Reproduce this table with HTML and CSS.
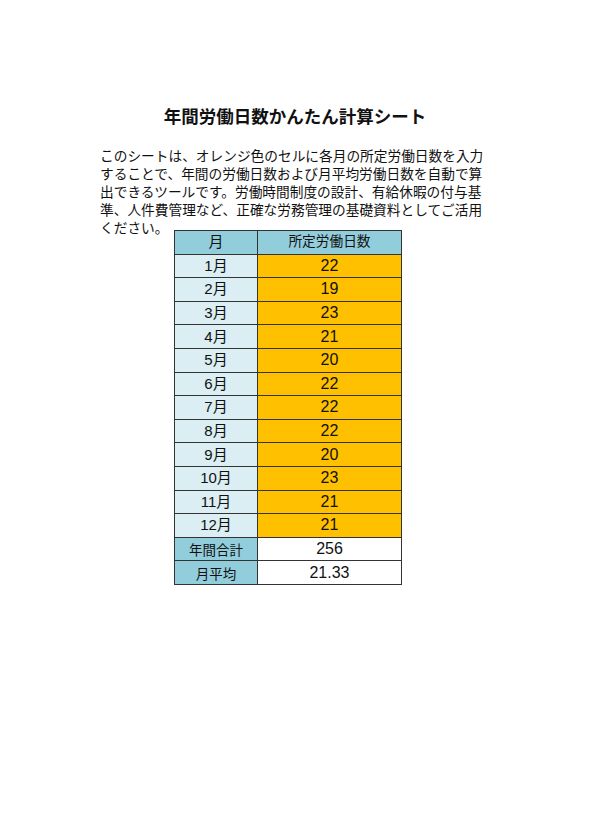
FILE: index.html
```html
<!DOCTYPE html>
<html lang="ja">
<head>
<meta charset="utf-8">
<link rel="stylesheet" href="styles.css">
</head>
<body>
<div class="page">
  <h1 class="title">年間労働日数かんたん計算シート</h1>
  <p class="intro">このシートは、オレンジ色のセルに各月の所定労働日数を入力<br>することで、年間の労働日数および月平均労働日数を自動で算<br>出できるツールです。労働時間制度の設計、有給休暇の付与基<br>準、人件費管理など、正確な労務管理の基礎資料としてご活用<br>ください。</p>
  <table class="sheet">
    <thead>
      <tr><th class="c-month">月</th><th class="c-val">所定労働日数</th></tr>
    </thead>
    <tbody>
      <tr><td class="c-month">1月</td><td class="c-input">22</td></tr>
      <tr><td class="c-month">2月</td><td class="c-input">19</td></tr>
      <tr><td class="c-month">3月</td><td class="c-input">23</td></tr>
      <tr><td class="c-month">4月</td><td class="c-input">21</td></tr>
      <tr><td class="c-month">5月</td><td class="c-input">20</td></tr>
      <tr><td class="c-month">6月</td><td class="c-input">22</td></tr>
      <tr><td class="c-month">7月</td><td class="c-input">22</td></tr>
      <tr><td class="c-month">8月</td><td class="c-input">22</td></tr>
      <tr><td class="c-month">9月</td><td class="c-input">20</td></tr>
      <tr><td class="c-month">10月</td><td class="c-input">23</td></tr>
      <tr><td class="c-month">11月</td><td class="c-input">21</td></tr>
      <tr><td class="c-month">12月</td><td class="c-input">21</td></tr>
      <tr><td class="c-label">年間合計</td><td class="c-result">256</td></tr>
      <tr><td class="c-label">月平均</td><td class="c-result">21.33</td></tr>
    </tbody>
  </table>
</div>
</body>
</html>
```

FILE: styles.css
```css
html, body {
  margin: 0;
  padding: 0;
  background: #ffffff;
}
body {
  font-family: "Liberation Sans", "Noto Sans CJK JP", sans-serif;
  color: #111111;
}
.page {
  width: 590px;
  padding-top: 103px;
}
.title {
  margin: 0;
  text-align: center;
  font-size: 17.5px;
  font-weight: bold;
  line-height: 26px;
  font-family: "Noto Sans CJK JP", sans-serif;
}
.intro {
  margin: 17px 0 0 100px;
  font-size: 13.7px;
  line-height: 18px;
  font-family: "Noto Sans CJK JP", sans-serif;
  white-space: nowrap;
}
.sheet {
  margin: -6px 0 0 174px;
  border-collapse: collapse;
  width: 228px;
  table-layout: fixed;
}
.sheet th, .sheet td {
  border: 1px solid #333333;
  height: 22.6px;
  padding: 0;
  text-align: center;
  font-size: 15px;
  font-weight: normal;
  line-height: 16px;
}
.c-month { width: 82px; }
th.c-month, th.c-val, .c-label { background: #92cddc; }
th.c-val { font-size: 13.7px; }
td.c-month { background: #daeef3; }
.c-input { background: #ffc000; }
.sheet .c-input, .sheet .c-result { font-size: 16px; }
.c-result { background: #ffffff; }
.sheet .c-label { font-family: "Noto Sans CJK JP", sans-serif; font-size: 13.5px; }
```
